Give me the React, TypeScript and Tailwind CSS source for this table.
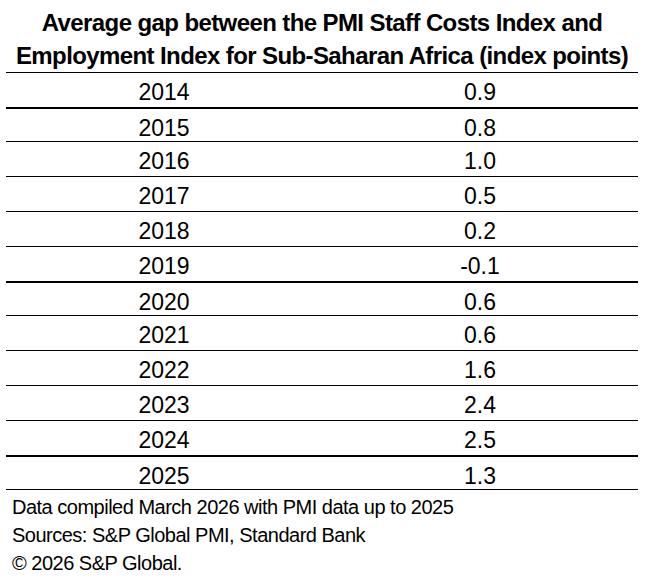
const rows: { year: string; gap: string; h: string; b: string }[] = [
  { year: "2014", gap: "0.9", h: "h-[36px]", b: "border-b-2" },
  { year: "2015", gap: "0.8", h: "h-[33px]", b: "border-b" },
  { year: "2016", gap: "1.0", h: "h-[35px]", b: "border-b" },
  { year: "2017", gap: "0.5", h: "h-[35px]", b: "border-b" },
  { year: "2018", gap: "0.2", h: "h-[35px]", b: "border-b" },
  { year: "2019", gap: "-0.1", h: "h-[36px]", b: "border-b-2" },
  { year: "2020", gap: "0.6", h: "h-[33px]", b: "border-b" },
  { year: "2021", gap: "0.6", h: "h-[35px]", b: "border-b" },
  { year: "2022", gap: "1.6", h: "h-[35px]", b: "border-b" },
  { year: "2023", gap: "2.4", h: "h-[35px]", b: "border-b" },
  { year: "2024", gap: "2.5", h: "h-[36px]", b: "border-b-2" },
  { year: "2025", gap: "1.3", h: "h-[33px]", b: "border-b" },
];

export default function App() {
  return (
    <div
      className="w-[661px] h-[579px] bg-white text-black overflow-hidden"
      style={{ fontFamily: '"Liberation Sans", Arial, sans-serif' }}
    >
      <div className="ml-[6px] w-[632px] h-[72px] pt-[6px] text-center font-bold text-[24px] leading-[33px] tracking-[-0.6px] whitespace-nowrap">
        <div>Average gap between the PMI Staff Costs Index and</div>
        <div>Employment Index for Sub-Saharan Africa (index points)</div>
      </div>

      <div className="ml-[6px] w-[632px] border-t border-black">
        {rows.map((r) => (
          <div
            key={r.year}
            className={`grid grid-cols-2 items-center pt-[2px] text-center text-[23px] border-black ${r.h} ${r.b}`}
          >
            <div>{r.year}</div>
            <div>{r.gap}</div>
          </div>
        ))}
      </div>

      <div className="pl-[12px] pt-[3px] text-[20px] leading-[28px] tracking-[-0.5px]">
        <div>Data compiled March 2026 with PMI data up to 2025</div>
        <div>Sources: S&amp;P Global PMI, Standard Bank</div>
        <div>© 2026 S&amp;P Global.</div>
      </div>
    </div>
  );
}
